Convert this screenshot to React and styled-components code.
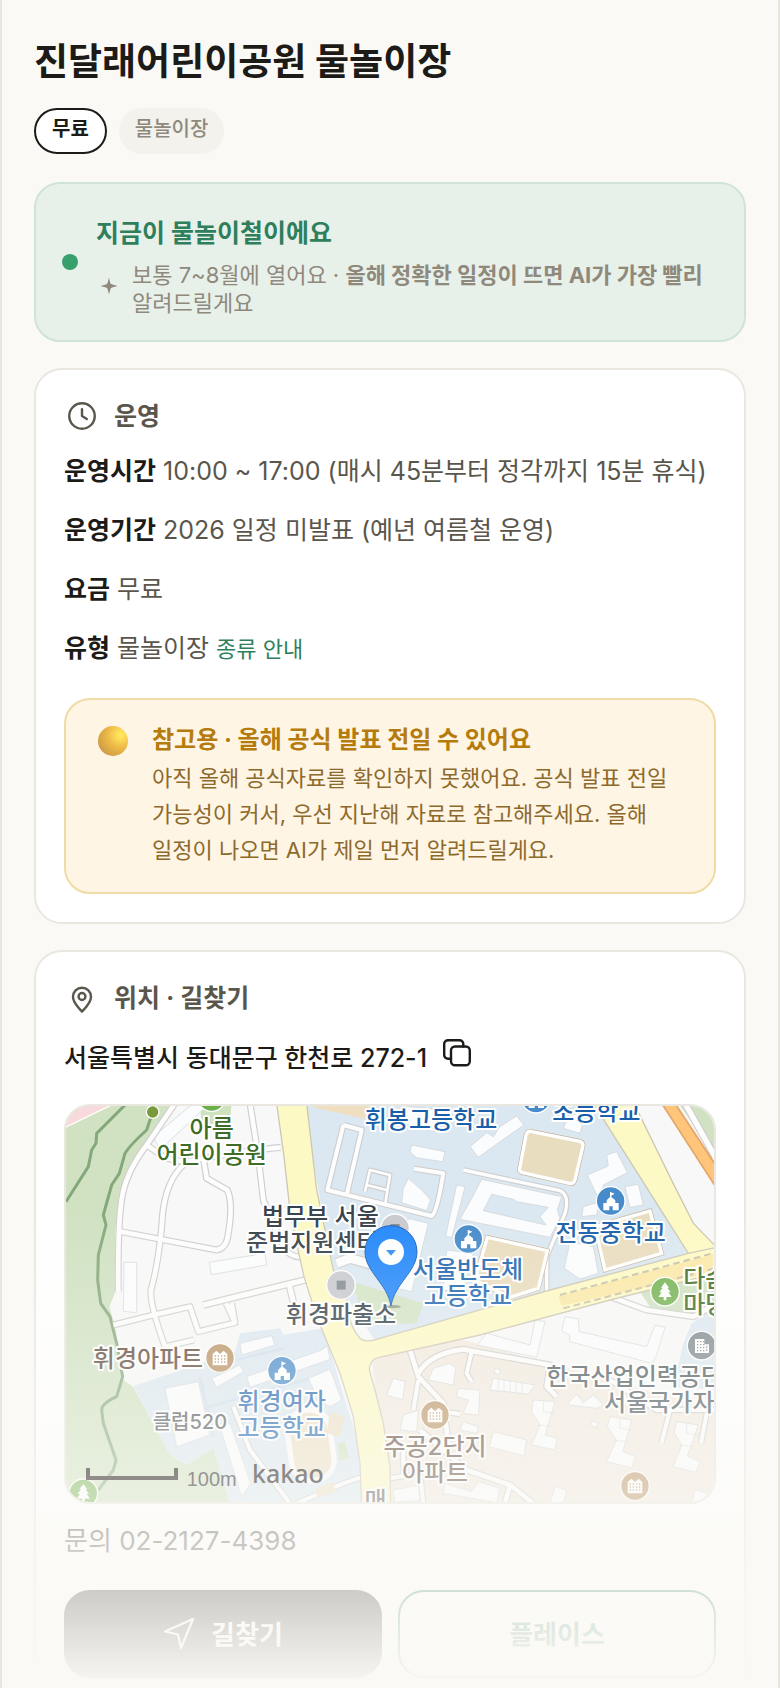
import React from "react";
import styled, { createGlobalStyle } from "styled-components";

const GlobalStyle = createGlobalStyle`
  * {
    box-sizing: border-box;
  }

  body {
    margin: 0;
    background: #faf9f5;
    color: #1c1b18;
    font-family: Inter, "Noto Sans CJK KR", sans-serif;
    word-break: keep-all;
  }

  h1, h2, h3, p, ul, dl, dd {
    margin: 0;
    padding: 0;
  }
`;

const Page = styled.main`
  position: relative;
  height: 100vh;
  overflow: hidden;
  padding: 38px 32px 0;
  border-left: 2px solid #e8e6df;
  border-right: 2px solid #e8e6df;
`;

const Title = styled.h1`
  font-size: 37px;
  font-weight: 700;
  line-height: 48px;
`;

const Chips = styled.div`
  display: flex;
  gap: 12px;
  margin: 22px 0 28px;
`;

const Chip = styled.span`
  height: 46px;
  padding: 0 16px;
  border: ${(p) => (p.$strong ? "2px solid #1c1b18" : "none")};
  border-radius: 23px;
  background: ${(p) => (p.$strong ? "#fff" : "#f3f2ed")};
  color: ${(p) => (p.$strong ? "#1c1b18" : "#8f897c")};
  font-size: 20px;
  font-weight: ${(p) => (p.$strong ? 700 : 500)};
  line-height: ${(p) => (p.$strong ? 38 : 42)}px;
`;

const Season = styled.section`
  display: flex;
  align-items: center;
  gap: 18px;
  min-height: 160px;
  padding: 22px 26px;
  border: 2px solid #cfe4d7;
  border-radius: 26px;
  background: #e8f0ea;
`;

const SeasonBody = styled.div`
  padding-top: 5px;
`;

const Dot = styled.span`
  flex: none;
  width: 16px;
  height: 16px;
  border-radius: 50%;
  background: #37a06c;
`;

const SeasonTitle = styled.h2`
  margin-bottom: 8px;
  font-size: 25px;
  font-weight: 700;
  line-height: 40px;
  color: #2f7f5c;
`;

const SeasonNote = styled.div`
  display: flex;
  align-items: center;
  gap: 12px;
  font-size: 22px;
  line-height: 28px;
  color: #8f897c;

  svg {
    flex: none;
    margin-bottom: 6px;
  }
`;

const Card = styled.section`
  margin-top: 26px;
  padding: 28px;
  border: 2px solid #eae7e1;
  border-radius: 28px;
  background: #fff;
`;

const CardHead = styled.h2`
  display: flex;
  align-items: center;
  gap: 14px;
  height: 36px;
  margin-bottom: 8px;
  font-size: 25px;
  font-weight: 700;
  line-height: 34px;
  color: #5a564c;
`;

const InfoRow = styled.div`
  height: 59px;
  font-size: 25px;
  line-height: 59px;
  color: #5a564c;

  dt,
  dd {
    display: inline;
  }

  dt {
    font-weight: 700;
    color: #1c1b18;
  }
`;

const GuideLink = styled.a`
  font-size: 22px;
  color: #2f7f5c;
  text-decoration: none;
`;

const Notice = styled.div`
  display: flex;
  gap: 24px;
  margin-top: 20px;
  padding: 22px 32px 24px;
  border: 2px solid #f0dba5;
  border-radius: 26px;
  background: #fff5e5;
`;

const Ball = styled.span`
  flex: none;
  width: 30px;
  height: 30px;
  margin-top: 4px;
  border-radius: 50%;
  background: radial-gradient(circle at 75% 30%, #ffe45c 8%, #ecb948 42%, #d5a343 70%, #d0786a 100%);
`;

const NoticeTitle = styled.h3`
  margin-bottom: 2px;
  font-size: 24px;
  font-weight: 700;
  line-height: 36px;
  color: #b57b0c;
`;

const NoticeText = styled.p`
  font-size: 22px;
  line-height: 36px;
  color: #8d6a2c;
`;

const Address = styled.div`
  display: flex;
  align-items: center;
  gap: 16px;
  height: 80px;
  padding-bottom: 16px;
  font-size: 25px;
  font-weight: 500;
`;

const IconButton = styled.button`
  display: flex;
  padding: 0 0 6px;
  border: none;
  background: none;
  color: #1c1b18;
  cursor: pointer;
`;

const MapFrame = styled.div`
  height: 400px;
  overflow: hidden;
  border: 2px solid #eae7e1;
  border-radius: 26px;

  svg {
    display: block;
    width: 100%;
    height: 100%;
  }
`;

const Phone = styled.p`
  margin: 12px 0 24px;
  font-size: 26px;
  line-height: 50px;
  color: #5a564c;
`;

const Actions = styled.div`
  display: grid;
  grid-template-columns: 1fr 1fr;
  gap: 16px;
`;

const Action = styled.button`
  display: flex;
  align-items: center;
  justify-content: center;
  gap: 16px;
  height: 88px;
  padding-bottom: 4px;
  border: 2px solid ${(p) => (p.$primary ? "#1c1b18" : "#2f7f5c")};
  border-radius: 26px;
  background: ${(p) => (p.$primary ? "#1c1b18" : "#fff")};
  color: ${(p) => (p.$primary ? "#fff" : "#2f7f5c")};
  font-family: inherit;
  font-size: 26px;
  font-weight: 700;
  cursor: pointer;
`;

const Fade = styled.div`
  position: absolute;
  right: -2px;
  bottom: 0;
  left: -2px;
  height: 480px;
  background: linear-gradient(rgba(250, 249, 245, 0), #faf9f5);
  pointer-events: none;
`;

const MapLabel = styled.text`
  font-family: Inter, "Noto Sans CJK KR", sans-serif;
  font-size: ${(p) => p.$size || 72}px;
  font-weight: 500;
  fill: ${(p) => p.$color};
  stroke: #fff;
  stroke-width: 12px;
  stroke-linejoin: round;
  paint-order: stroke;
`;

const lineProps = {
  fill: "none",
  stroke: "currentColor",
  strokeLinecap: "round",
  strokeLinejoin: "round",
};

const ClockIcon = () => (
  <svg width="36" height="36" viewBox="0 0 24 24" strokeWidth="1.6" {...lineProps}>
    <circle cx="12" cy="12" r="8.5" />
    <path d="M12 7.4V12l3.2 2" />
  </svg>
);

const PinIcon = () => (
  <svg width="36" height="36" viewBox="0 0 24 24" strokeWidth="1.6" {...lineProps}>
    <path d="M18 11.2c0 4.2-6 9.8-6 9.8s-6-5.600-6-9.800a6 6 0 0 1 12 0z" />
    <circle cx="12" cy="11" r="2.300" />
  </svg>
);

const CopyIcon = () => (
  <svg width="28" height="28" viewBox="0 0 28 28" strokeWidth="2.4" {...lineProps}>
    <rect x="8" y="7.500" width="18.800" height="18.800" rx="4" />
    <path d="M8 19.800H5a3.800 3.800 0 0 1-3.800-3.800V5A3.800 3.800 0 0 1 5 1.200h11.500A3.800 3.800 0 0 1 20.300 5v2.500" />
  </svg>
);

const SparkIcon = () => (
  <svg width="24" height="24" viewBox="0 0 24 24" fill="currentColor">
    <path d="M13 3.500Q14 9.500 15 10T21.500 12Q15.500 13.500 15 14T13 20.500Q11.500 14.500 11 14T4.500 12Q10.500 10.500 11 10T13 3.500Z" />
  </svg>
);

const SendIcon = () => (
  <svg width="32" height="32" viewBox="0 0 32 32" strokeWidth="2.2" {...lineProps}>
    <path d="M30 2L2 14.500l13 3L18 31z" />
  </svg>
);

// map drawing units are a third of a pixel
const roads = [
  ["M375 40L290 165Q225 250 215 330Q203 400 205 604", 14],
  ["M290 165L340 200Q400 225 460 205L600 182L692 172", 14],
  ["M400 225Q350 270 338 370Q330 500 303 600Q298 640 345 770L432 750", 14],
  ["M212 425L500 480Q530 475 535 430Q550 340 532 300L470 265L460 205", 14],
  ["M600 40L625 200L640 330L700 470Q720 505 760 500", 14],
  ["M460 645L765 570M718 585L740 680", 16],
  ["M190 705L310 675L420 650L445 725L555 698L528 640M555 698L545 640", 14],
  ["M860 520L900 505L990 530", 26],
  ["M1240 240L1530 302Q1560 315 1545 370L1490 500V612", 10],
  ["M880 105L935 120L890 315M880 105L832 300L1145 378Q1160 370 1180 250L1092 236", 12],
  ["M945 305L960 240L1020 255L1005 345M950 285L1010 300", 8],
  ["M550 950L600 1080L720 1240M740 1240L880 1180L940 1160", 12],
  ["M1860 280L1930 430L2000 480", 12],
  ["M1680 620L1790 660L1930 680L2000 640", 14],
  ["M1080 780L1105 860L1180 940L1195 1060", 14],
  ["M1105 850Q1140 790 1240 778L1500 825L1490 890L1520 920", 14],
  ["M1265 785L1250 850L1265 875M1105 870L1090 960M1180 965L1230 972", 12],
  ["M1110 1020L1250 1140L1380 1185L1450 1240M1380 1185L1365 1240", 14],
  ["M1020 1165L1110 1150L1120 1240M1060 1080V1160", 12],
  ["M1680 870L1820 960L2000 960M1860 960L1835 1058M1970 970L1953 1060", 12],
  ["M1905 40L1995 200", 16],
];

const buildings = [
  "M1085 165L1185 185L1178 215L1100 203L1080 186Z",
  "M1260 170L1310 128L1330 140L1350 110L1400 78L1422 105L1350 155L1285 202Z",
  "M1060 48L1175 60L1150 125L1060 100Z",
  "M1220 285L1245 290L1205 443L1187 437Z",
  "M1295 268L1535 320L1522 360L1530 385L1500 442L1230 388L1268 320Z",
  "M1075 265L1115 300L1142 330L1130 362L1055 338L1060 295Z",
  "M1670 195L1700 185L1732 248L1660 285L1640 375L1595 380L1600 350L1650 335L1612 255L1675 228Z",
  "M1725 290L1765 283L1780 345L1740 352Z",
  "M1560 455L1630 470L1645 550L1590 567L1543 535Z",
  "M1075 385L1135 400L1085 605L1020 590Z",
  "M1190 480L1270 490L1240 600L1180 600Z",
  "M1555 80L1610 60L1590 130L1540 115Z",
  "M222 517H260V668L220 664Z",
  "M478 517L645 490L650 525L484 554Z",
  "M310 140L430 40L470 48L330 180Z",
  "M345 895L445 875L480 1035L380 1070Z",
  "M570 760L665 737L675 765L575 795Z",
  "M485 865L570 825L580 845L500 892Z",
  "M590 860L815 780L832 768L840 808L600 892Z",
  "M775 865L840 838L875 930L840 950L805 930Z",
  "M510 1010L540 1000L602 1180L575 1220Z",
  "M1310 730L1440 765L1455 692L1485 694L1460 802L1282 765Z",
  "M1545 680L1585 686L1588 725L1790 770L1815 705L1845 712L1818 800L1805 820L1560 755L1558 735L1535 722Z",
  "M1330 1025L1430 1050L1422 1098L1318 1070Z",
  "M1150 835L1200 820L1217 835L1210 885L1135 870Z",
  "M1330 865L1455 885L1435 912L1320 900Z",
  "M1225 895L1290 900L1285 975L1240 970L1255 930L1220 920Z",
  "M1030 865L1065 875L1058 930L1010 915Z",
  "M1060 975L1105 960L1100 1025L1050 1020Z",
  "M1240 995L1285 1010L1280 1030L1230 1020Z",
  "M1450 930L1515 935L1485 1035L1522 1045L1515 1080L1445 1065L1470 1005L1445 965Z",
  "M1680 980L1745 990L1718 1085L1757 1100L1745 1133L1670 1115L1700 1050L1672 1010Z",
  "M1880 995L1945 1005L1912 1098L1950 1115L1938 1147L1870 1130L1895 1065L1873 1028Z",
  "M1555 940L1580 912L1600 938L1630 915L1660 945L1640 955L1560 945Z",
  "M1185 1180L1265 1205L1285 1175L1350 1195L1340 1238L1180 1210Z",
  "M1030 1200L1110 1185V1232L1035 1236Z",
  "M1515 1190L1550 1200L1540 1240H1500Z",
  "M1935 1200L1975 1210L1960 1240H1925Z",
  "M1335 835L1352 839L1348 853L1333 850Z",
  "M1625 992L1645 998L1640 1012L1622 1007Z",
];

const fields = [
  "M1442 124L1590 154Q1602 158 1598 172L1575 270Q1570 284 1558 280L1418 248Q1404 244 1410 230L1428 136Q1432 122 1442 124Z",
  "M1312 442L1492 482L1465 595L1380 622L1275 570Z",
  "M1635 410L1800 363L1835 490L1665 540Z",
];

const labels = [
  [485, 141, "아름", "#3f6d27"],
  [485, 219, "어린이공원", "#3f6d27"],
  [1143, 114, "휘봉고등학교", "#1a5fa9"],
  [1639, 91, "초등학교", "#1a5fa9"],
  [811, 404, "법무부 서울", "#37424c"],
  [787, 482, "준법지원센터", "#37424c"],
  [873, 700, "휘경파출소", "#37424c"],
  [1254, 564, "서울반도체", "#1f66b0"],
  [1254, 642, "고등학교", "#1f66b0"],
  [1682, 452, "전동중학교", "#1a5fa9"],
  [1966, 592, "다솜", "#3f6d27"],
  [1966, 668, "마당", "#3f6d27"],
  [1754, 886, "한국산업인력공단", "#4a565c"],
  [1861, 964, "서울국가자격", "#4a565c"],
  [294, 832, "휘경아파트", "#5c4638"],
  [695, 959, "휘경여자", "#1f66b0"],
  [695, 1037, "고등학교", "#1f66b0"],
  [1155, 1094, "주공2단지", "#5c4638"],
  [1155, 1172, "아파트", "#5c4638"],
  [977, 1258, "매", "#55565a"],
];

const Marker = ({ x, y, color, children }) => (
  <g transform={`translate(${x} ${y})`}>
    <circle r="43" fill={color} stroke="#fff" strokeWidth="4" />
    {children}
  </g>
);

const School = ({ x, y }) => (
  <Marker x={x} y={y} color="#478bca">
    <path fill="#fff" d="M-2-28L12-22L2-16V-12L14-2V6H24V28H6V16H-4V28H-22V6H-12V-2L-2-12Z" />
  </Marker>
);

const Apartment = ({ x, y }) => (
  <Marker x={x} y={y} color="#b89061">
    <path fill="#fff" d="M-22 22V-12L-11-22L0-12L11-22L22-12V22Z" />
    <path d="M-14-8V18M-5-8V18M5-8V18M14-8V18" stroke="#b89061" strokeWidth="4" strokeDasharray="4 5" />
  </Marker>
);

const Tree = ({ x, y }) => (
  <Marker x={x} y={y} color="#76b354">
    <path fill="#fff" d="M0-28L12-12H7L17 2H10L20 16H4V26H-4V16H-20L-10 2H-17L-7-12H-12Z" />
  </Marker>
);

const Square = ({ x, y }) => (
  <Marker x={x} y={y} color="#c9cacf">
    <rect x="-13" y="-13" width="27" height="27" fill="#838b92" />
  </Marker>
);

const ParkMap = () => (
  <svg viewBox="48 48 1944 1188" preserveAspectRatio="xMidYMid slice" role="img" aria-label="지도">
    <rect x="0" y="0" width="2100" height="1300" fill="#f8f8f8" />
    <path
      fill="#d0e2c2"
      d="M40 40H375L290 165Q225 250 205 330L195 430L198 600L178 650L195 710L220 870L250 890L360 1095L410 1125L490 1075L540 1240H40Z"
    />
    <path fill="#f8dadc" stroke="#fff" strokeWidth="4" d="M40 40H195L40 115Z" />
    <path fill="#cfe2c0" d="M450 40H545L540 90L455 110Z" />
    <path fill="#dbe8f1" d="M760 40H1640L1920 490L980 760L850 560Z" />
    <path fill="#efdfc0" d="M780 40H980L960 90L790 52Z" />
    <path fill="#d3e4c5" d="M905 575L1120 640L1100 700L950 705Z" />
    <path fill="#d0e2c2" d="M1885 40H2000V200ZM1760 590L2000 520V690L1800 650Z" />
    <path
      fill="#dbe8f1"
      d="M250 888L555 785L570 730L690 715L700 735L820 715L940 1110V1240H540L490 1075L410 1125L360 1095Z"
    />
    <path fill="#dbe8f1" d="M1925 700L2000 650V900L1870 890L1900 760Z" />
    <path fill="#f2eadf" d="M965 800L1240 750L1500 820L2000 960V1240H1015Z" />
    <path fill="none" stroke="#cfdfec" strokeWidth="8" d="M450 860L490 1040M440 960L800 860M560 810L700 775" />
    <path fill="none" stroke="#85a87a" strokeWidth="9" d="M228 42L140 130L138 160L125 180L115 230L48 335" />
    <path
      fill="none"
      stroke="#85a87a"
      strokeWidth="9"
      strokeLinejoin="round"
      d="M308 66L290 120Q240 165 225 190L208 250L185 285L160 375L168 405L145 495L143 570L152 640L180 680L200 760L218 860L200 920Q155 940 155 960L160 1000L198 1110L190 1140L145 1200"
    />
    <g fill="#fbfcfd" stroke="#cdd0d3" strokeWidth="2">
      {buildings.map((d) => (
        <path key={d} d={d} />
      ))}
    </g>
    <path
      fill="#dbe8f1"
      stroke="#cdd0d3"
      strokeWidth="2"
      d="M1325 313L1390 328L1400 335L1495 352L1470 380L1488 405L1378 380L1300 362Z"
    />
    <path
      stroke="#d5d7d9"
      strokeWidth="2"
      fill="none"
      d="M1345 868V900M1362 870V903M1380 872V906M1398 875V908M1416 878V910M1465 1005L1510 1010M1695 1052L1735 1055M1890 1065L1930 1070M1480 935V965L1515 970M1710 985V1015L1745 1020M1910 1000V1030L1945 1035"
    />
    {roads.map(([d, w]) => (
      <path key={d} d={d} fill="none" stroke="#cfcfcf" strokeWidth={w + 7} strokeLinejoin="round" />
    ))}
    {roads.map(([d, w]) => (
      <path key={d} d={d} fill="none" stroke="#fdfdfd" strokeWidth={w} strokeLinejoin="round" />
    ))}
    {fields.map((d) => (
      <g key={d}>
        <path d={d} fill="#e9ddbf" stroke="#c9b39c" strokeWidth="14" />
        <path d={d} fill="#e9ddbf" stroke="#fff" strokeWidth="10" />
      </g>
    ))}
    <rect x="718" y="960" width="128" height="212" rx="60" fill="#ece0c6" stroke="#fbfbfb" strokeWidth="16" transform="rotate(-8 782 1066)" />
    <path fill="#ece0c6" d="M840 965L885 980L870 1042L830 1030ZM798 1195L850 1175L856 1205L800 1225Z" />
    <path fill="#cfe2c0" d="M862 1060L885 1055L897 1105L868 1112Z" />
    <path fill="#fdf9c4" stroke="#cdc8b4" strokeWidth="4" d="M1630 40H1752L1862 265L1930 400L2000 472V560H1960L1915 490Z" />
    <path
      fill="#fdf9c4"
      stroke="#cdc8b4"
      strokeWidth="4"
      d="M680 40L702 200L722 380L762 560L800 680L870 850L910 980L930 1120L935 1250H1022L1020 1130L1000 1000L975 900L958 840Q958 810 985 803L1290 735L1680 630L2000 550V472L1915 490L1500 600L990 745Q945 760 930 745Q890 700 890 612L850 540L800 300L770 40Z"
    />
    <path fill="#fbe9a8" d="M1525 618L1990 492V545L1535 648Z" />
    <path fill="none" stroke="#c9c3ac" strokeWidth="6" strokeDasharray="20 12" d="M1530 615L1995 488M1540 655L1995 535" />
    <path fill="#ffc57a" stroke="#e3a568" strokeWidth="5" d="M1835 40H1875L2000 230V295Z" />
    <circle cx="308" cy="66" r="19" fill="#78993c" stroke="#fff" strokeWidth="4" />
    <circle cx="485" cy="22" r="42" fill="#6db04a" stroke="#fff" strokeWidth="4" />

    <Square x={1035} y={415} />
    <Square x={873} y={585} />
    <School x={1458} y={26} />
    <School x={1255} y={447} />
    <School x={1682} y={333} />
    <School x={696} y={842} />
    <Apartment x={510} y={804} />
    <Apartment x={1155} y={975} />
    <Apartment x={1755} y={1188} />
    <Tree x={1845} y={605} />
    <Tree x={100} y={1210} />
    <Marker x={1955} y={767} color="#7e8990">
      <path fill="#fff" d="M-20-20H8V-4H22V22H-20Z" />
      <path d="M-12-14V18M-3-14V18M6-14V18M15 2V18" stroke="#7e8990" strokeWidth="4" strokeDasharray="4 5" />
    </Marker>

    {labels.map(([x, y, label, color]) => (
      <MapLabel key={`${x}-${y}`} x={x} y={y} textAnchor="middle" $color={color}>
        {label}
      </MapLabel>
    ))}
    <MapLabel x="308" y="1017" $size={60} $color="#4e5458">
      클럽520
    </MapLabel>

    <ellipse cx="1030" cy="650" rx="22" ry="5" fill="#000" opacity="0.3" />
    <path
      fill="#2388fb"
      stroke="#1a5fb8"
      strokeWidth="3"
      d="M1023 648C1012 580 945 545 945 485A78 78 0 0 1 1101 485C1101 545 1034 580 1023 648Z"
    />
    <circle cx="1023" cy="486" r="39" fill="#fff" />
    <path fill="#2f8ff0" d="M1008 480H1038L1023 497Z" />

    <path fill="none" stroke="#050000" strokeWidth="12" d="M114 1134V1164H378V1134" />
    <text x="410" y="1187" fontFamily="Liberation Sans" fontSize="60" fill="#111">
      100m
    </text>
    <text x="606" y="1180" fontFamily="Noto Sans" fontSize="75" fontWeight="500" fill="#050000">
      kakao
    </text>
  </svg>
);

const hours = [
  ["운영시간", "10:00 ~ 17:00 (매시 45분부터 정각까지 15분 휴식)"],
  ["운영기간", "2026 일정 미발표 (예년 여름철 운영)"],
  ["요금", "무료"],
  ["유형", "물놀이장", "종류 안내"],
];

function App() {
  return (
    <Page>
      <GlobalStyle />
      <Title>진달래어린이공원 물놀이장</Title>
      <Chips>
        <Chip $strong>무료</Chip>
        <Chip>물놀이장</Chip>
      </Chips>

      <Season>
        <Dot />
        <SeasonBody>
          <SeasonTitle>지금이 물놀이철이에요</SeasonTitle>
          <SeasonNote>
            <SparkIcon />
            <p>
              보통 7~8월에 열어요 · <b>올해 정확한 일정이 뜨면 AI가 가장 빨리</b> 알려드릴게요
            </p>
          </SeasonNote>
        </SeasonBody>
      </Season>

      <Card>
        <CardHead>
          <ClockIcon />
          운영
        </CardHead>
        <dl>
          {hours.map(([term, value, link]) => (
            <InfoRow key={term}>
              <dt>{term}</dt>{" "}
              <dd>
                {value} {link && <GuideLink href="#types">{link}</GuideLink>}
              </dd>
            </InfoRow>
          ))}
        </dl>
        <Notice>
          <Ball />
          <div>
            <NoticeTitle>참고용 · 올해 공식 발표 전일 수 있어요</NoticeTitle>
            <NoticeText>
              아직 올해 공식자료를 확인하지 못했어요. 공식 발표 전일 가능성이 커서, 우선 지난해 자료로
              참고해주세요. 올해 일정이 나오면 AI가 제일 먼저 알려드릴게요.
            </NoticeText>
          </div>
        </Notice>
      </Card>

      <Card>
        <CardHead>
          <PinIcon />
          위치 · 길찾기
        </CardHead>
        <Address>
          서울특별시 동대문구 한천로 272-1
          <IconButton type="button" aria-label="주소 복사">
            <CopyIcon />
          </IconButton>
        </Address>
        <MapFrame>
          <ParkMap />
        </MapFrame>
        <Phone>문의 02-2127-4398</Phone>
        <Actions>
          <Action type="button" $primary>
            <SendIcon />
            길찾기
          </Action>
          <Action type="button">플레이스</Action>
        </Actions>
      </Card>
      <Fade />
    </Page>
  );
}

export default App;
